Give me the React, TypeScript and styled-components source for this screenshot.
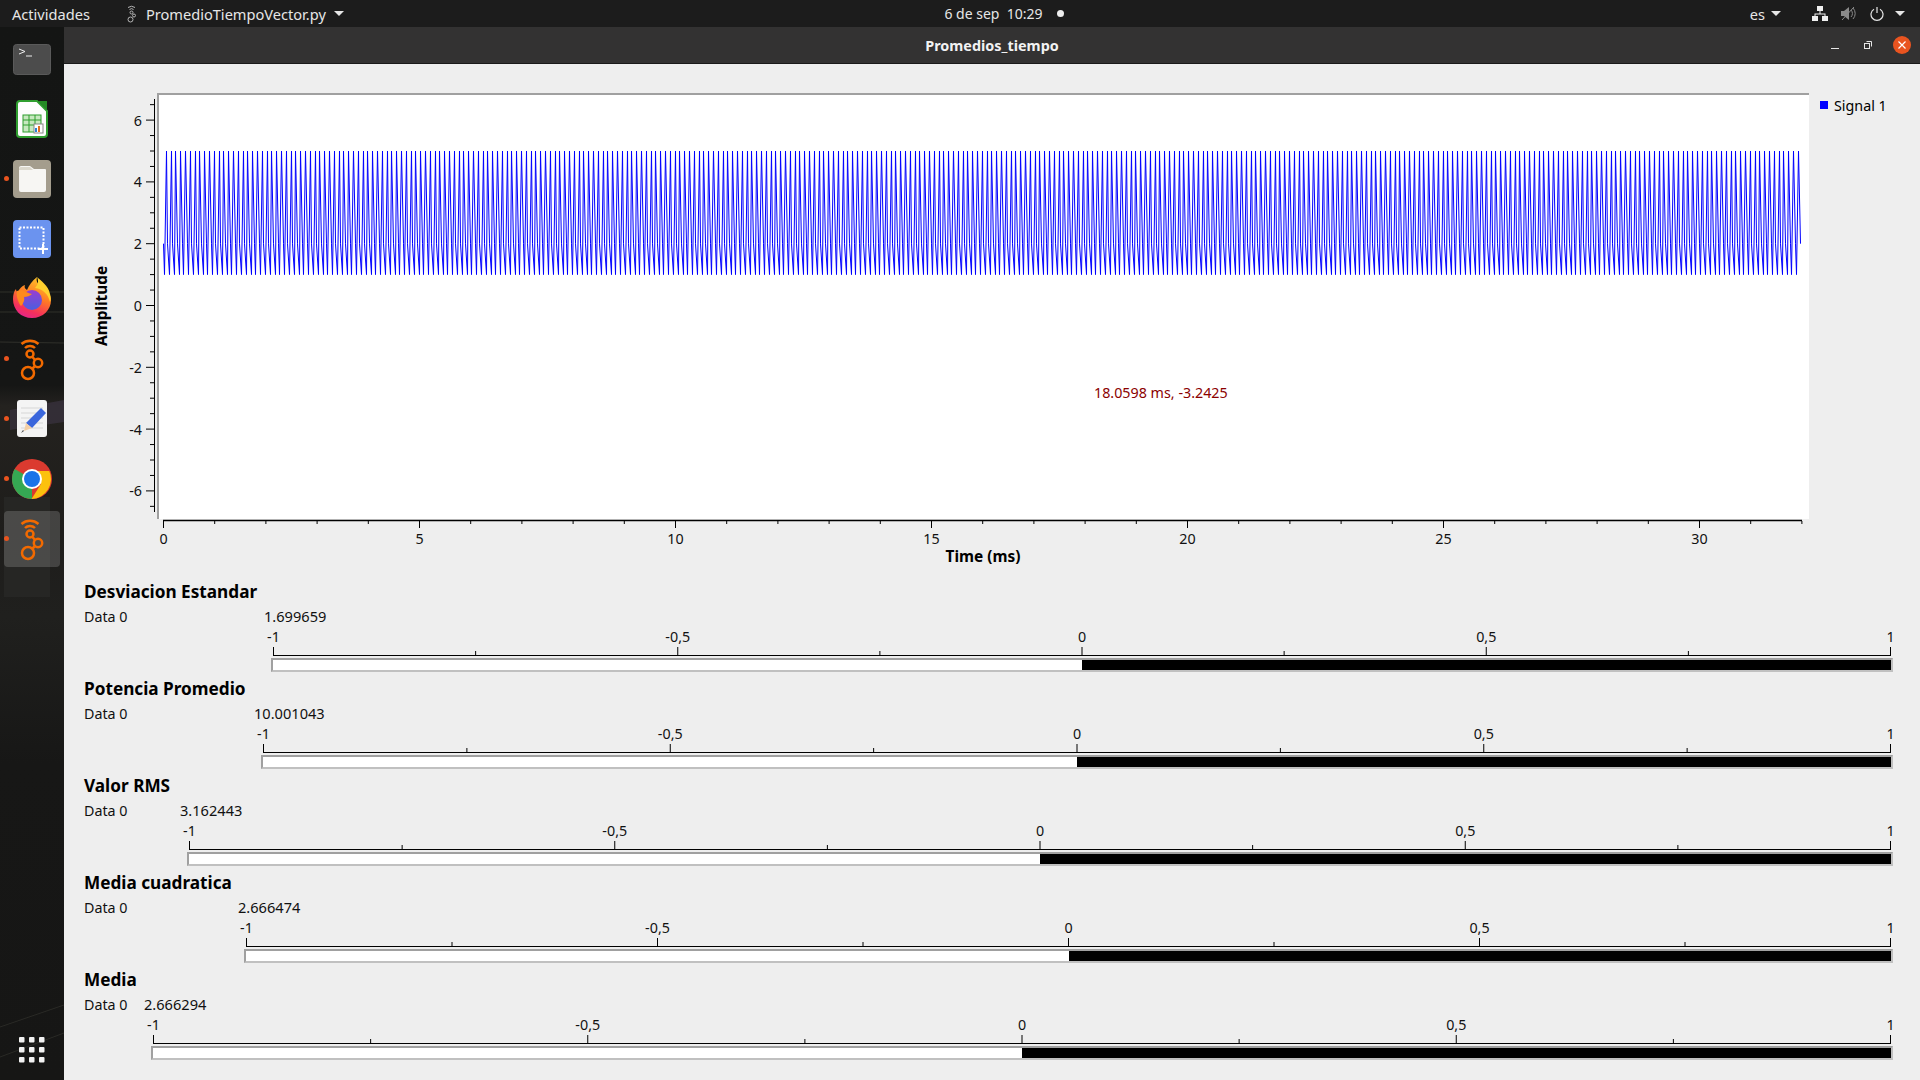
import React from 'react';
import styled, { createGlobalStyle } from 'styled-components';

const uiFont = '"Noto Sans", "Open Sans", "Liberation Sans", sans-serif';

const GlobalStyle = createGlobalStyle`
  html, body {
    margin: 0;
    padding: 0;
    width: 1920px;
    height: 1080px;
    overflow: hidden;
    background: #eeeeee;
    font-family: ${uiFont};
  }
  * { box-sizing: border-box; }
`;

const Desktop = styled.div`
  width: 1920px;
  height: 1080px;
  display: flex;
  flex-direction: column;
`;

const TopBar = styled.header`
  height: 27px;
  flex: none;
  background: #1c1c1c;
  color: #e6e6e6;
  font-size: 14.6px;
  display: grid;
  grid-template-columns: 1fr auto 1fr;
  align-items: center;
`;

const TopLeft = styled.div`
  display: flex;
  align-items: center;
  padding-left: 12px;
`;

const AppMenu = styled.div`
  display: flex;
  align-items: center;
  margin-left: 36px;
  gap: 8px;
`;

const Clock = styled.div`
  display: flex;
  align-items: center;
  margin-left: 88px;
  font-size: 14px;
  white-space: pre;
`;

const ClockDot = styled.span`
  width: 7px;
  height: 7px;
  border-radius: 50%;
  background: #eeeeee;
  margin-left: 14px;
`;

const TopRight = styled.div`
  display: flex;
  align-items: center;
  justify-content: flex-end;
  padding-right: 15px;
`;

const Caret = styled.span<{ $gap?: number }>`
  width: 0;
  height: 0;
  margin-left: ${({ $gap }) => $gap ?? 0}px;
  border-left: 5px solid transparent;
  border-right: 5px solid transparent;
  border-top: 5px solid #e6e6e6;
`;

const TrayIcon = styled.svg<{ $gap: number }>`
  display: block;
  margin-left: ${({ $gap }) => $gap}px;
`;

const Body = styled.div`
  flex: 1;
  display: flex;
  min-height: 0;
`;

const Dock = styled.nav`
  width: 64px;
  flex: none;
  position: relative;
  overflow: hidden;
  display: flex;
  flex-direction: column;
  padding-top: 2px;
  background: linear-gradient(180deg, #141514 0%, #151615 34%, #24221f 36%, #1e1d1b 48%, #20201e 56%, #171716 70%, #161615 100%);
`;

const DockTexture = styled.svg`
  position: absolute;
  left: 0;
  top: 0;
`;

const DockItem = styled.div<{ $active?: boolean; $lift?: number }>`
  position: relative;
  height: 60px;
  flex: none;
  display: flex;
  align-items: center;
  justify-content: center;
  padding-bottom: ${({ $lift }) => $lift ?? 0}px;
  &::before {
    content: '';
    display: ${({ $active }) => ($active ? 'block' : 'none')};
    position: absolute;
    left: 4px;
    right: 4px;
    top: 2px;
    bottom: 2px;
    border-radius: 4px;
    background: rgba(255, 255, 255, 0.17);
  }
  svg { position: relative; }
`;

const RunDot = styled.span`
  position: absolute;
  left: 4px;
  top: 27px;
  width: 5px;
  height: 5px;
  border-radius: 50%;
  background: #e9541f;
`;

const GridButton = styled.div`
  margin-top: auto;
  height: 60px;
  display: flex;
  align-items: center;
  justify-content: center;
  position: relative;
`;

const Window = styled.main`
  flex: 1;
  min-width: 0;
  display: flex;
  flex-direction: column;
  background: #eeeeee;
`;

const TitleBar = styled.div`
  height: 37px;
  flex: none;
  background: #333232;
  border-bottom: 1px solid #1a1a1a;
  position: relative;
  display: flex;
  align-items: center;
  justify-content: center;
  padding-top: 1px;
  color: #f2f2f2;
  font-weight: 700;
  font-size: 14.4px;
`;

const WindowButtons = styled.div`
  position: absolute;
  right: 9px;
  top: 9px;
  display: flex;
  align-items: center;
`;

const CloseButton = styled.div`
  width: 18px;
  height: 18px;
  border-radius: 50%;
  background: #e95420;
  display: flex;
  align-items: center;
  justify-content: center;
  margin-left: 21px;
`;

const PlotArea = styled.section`
  height: 514px;
  flex: none;
  padding-top: 29px;
  display: grid;
  grid-template-columns: 93px 1652px 1fr;
  grid-template-rows: 426px auto;
  color: #000;
`;

const YAxisCell = styled.div`
  display: flex;
  align-items: flex-start;
`;

const AxisTitleY = styled.div`
  width: 24px;
  margin-left: 26px;
  height: 426px;
  writing-mode: vertical-rl;
  transform: rotate(180deg);
  text-align: center;
  font-weight: 700;
  font-size: 15.4px;
  line-height: 24px;
`;

const Canvas = styled.div`
  position: relative;
  background: #fff;
  border-top: 2px solid #a0a0a0;
  border-left: 2px solid #a0a0a0;
  overflow: hidden;
`;

const Tracker = styled.span`
  position: absolute;
  left: 935px;
  top: 288px;
  color: #8b0000;
  font-size: 14.3px;
  white-space: nowrap;
`;

const Legend = styled.div`
  display: flex;
  align-items: center;
  height: 20px;
  margin: 2px 0 0 11px;
  font-size: 14.3px;
  gap: 6px;
`;

const LegendSwatch = styled.span`
  width: 8px;
  height: 8px;
  background: #0000ff;
`;

const XAxisCell = styled.div`
  grid-column: 2 / 4;
  display: flex;
  flex-direction: column;
`;

const AxisTitleX = styled.div`
  width: 1652px;
  text-align: center;
  margin-top: 1px;
  font-weight: 700;
  font-size: 15.4px;
  line-height: 20px;
`;

const Meters = styled.div`
  padding: 0 0 0 20px;
  display: flex;
  flex-direction: column;
`;

const MeterBlock = styled.section<{ $inset: number }>`
  height: 97px;
  display: grid;
  grid-template-columns: ${({ $inset }) => $inset}px 1fr;
  grid-template-rows: 25px 27px 1fr;
  color: #111;
`;

const MeterTitle = styled.h3`
  grid-column: 1 / 3;
  margin: 0;
  align-self: end;
  font-size: 17.2px;
  line-height: 22px;
  font-weight: 700;
  color: #000;
`;

const DataLabel = styled.div`
  font-size: 14.3px;
  line-height: 22px;
  padding-top: 3px;
`;

const ValueText = styled.div<{ $shift: number }>`
  font-size: 14.6px;
  line-height: 22px;
  padding-top: 2px;
  margin-left: ${({ $shift }) => $shift}px;
`;

const Thermo = styled.div`
  grid-column: 2;
  width: 100%;
  display: flex;
  flex-direction: column;
`;

const ThermoBar = styled.div`
  height: 14px;
  margin-top: 1px;
  border-top: 2px solid #a0a0a0;
  border-left: 2px solid #a0a0a0;
  border-right: 2px solid #c0c0c0;
  border-bottom: 2px solid #c0c0c0;
  display: flex;
  background: #fff;
`;

const ThermoFill = styled.div<{ $share: number }>`
  width: ${({ $share }) => $share}%;
  height: 100%;
  margin-left: auto;
  background: #000;
`;

const ScaleSvg = styled.svg`
  display: block;
  overflow: visible;
`;

const SIGNAL_LEVELS = [2, 1, 5];
const SAMPLES = 1024;
const X0 = 3.5; // first sample inside the canvas
const PX_PER_MS = 51.2;
const Y_ZERO = 210.5; // value 0 inside the canvas
const PX_PER_UNIT = 30.9;

const signalPoints = Array.from({ length: SAMPLES }, (_, i) => {
  const x = Math.round(X0 + (i * 1637) / (SAMPLES - 1)) + 0.5;
  const y = Y_ZERO - SIGNAL_LEVELS[i % 3] * PX_PER_UNIT;
  return `${x.toFixed(2)},${y.toFixed(2)}`;
}).join(' ');

function SignalTrace() {
  return (
    <svg width="1650" height="424" style={{ display: 'block' }}>
      <polyline points={signalPoints} fill="none" stroke="#0000ff" strokeWidth="1" strokeLinejoin="bevel" />
    </svg>
  );
}

const axisText = { fontFamily: uiFont, fontSize: 14.3, fill: '#111' };

function YAxis() {
  const ticks: React.ReactNode[] = [];
  for (let v = -6.5; v <= 6.5; v += 0.5) {
    const y = 212.5 - v * PX_PER_UNIT;
    const major = Math.abs(v % 2) === 0;
    ticks.push(<line key={v} x1={major ? 0 : 4} x2="8" y1={y} y2={y} stroke="#000" />);
    if (major) {
      ticks.push(
        <text key={`l${v}`} x="-4" y={y + 5.5} textAnchor="end" style={axisText}>{v}</text>
      );
    }
  }
  return (
    <svg width="10" height="426" style={{ marginLeft: 32, overflow: 'visible', flex: 'none' }}>
      <line x1="8.5" x2="8.5" y1="6" y2="419" stroke="#000" />
      {ticks}
    </svg>
  );
}

function XAxis() {
  const ticks: React.ReactNode[] = [];
  for (let ms = 0; ms <= 32; ms += 1) {
    const x = 6.5 + ms * PX_PER_MS;
    const major = ms % 5 === 0;
    ticks.push(<line key={ms} x1={x} x2={x} y1="1" y2={major ? 8 : 4} stroke="#000" />);
    if (major) {
      ticks.push(
        <text key={`l${ms}`} x={x} y="24" textAnchor="middle" style={axisText}>{ms}</text>
      );
    }
  }
  return (
    <svg width="1660" height="26" style={{ display: 'block', marginTop: 1, overflow: 'visible' }}>
      <line x1="6" x2="1645" y1="0.5" y2="0.5" stroke="#000" strokeWidth="1.5" />
      {ticks}
    </svg>
  );
}

const METERS = [
  { title: 'Desviacion Estandar', value: '1.699659', inset: 187, shift: -7 },
  { title: 'Potencia Promedio', value: '10.001043', inset: 177, shift: -7 },
  { title: 'Valor RMS', value: '3.162443', inset: 103, shift: -7 },
  { title: 'Media cuadratica', value: '2.666474', inset: 160, shift: -6 },
  { title: 'Media', value: '2.666294', inset: 67, shift: -7 },
];

const SCALE_TICKS = [-1, -0.75, -0.5, -0.25, 0, 0.25, 0.5, 0.75, 1];

function ThermoScale({ width }: { width: number }) {
  const span = width - 5;
  return (
    <ScaleSvg width={width} height="27">
      <line x1="2" x2={width - 2} y1="25.5" y2="25.5" stroke="#000" />
      {SCALE_TICKS.map(v => {
        const x = 2.5 + ((v + 1) / 2) * span;
        const major = v * 2 === Math.round(v * 2);
        return (
          <g key={v}>
            <line x1={x} x2={x} y1={major ? 17 : 21} y2="26" stroke="#000" />
            {major && (
              <text x={x} y="12" textAnchor="middle" style={axisText}>
                {String(v).replace('.', ',')}
              </text>
            )}
          </g>
        );
      })}
    </ScaleSvg>
  );
}

function GnuRadioIcon() {
  return (
    <svg width="40" height="44" viewBox="0 0 40 44" fill="none" stroke="#f26a00" strokeWidth="2.500">
      <path d="M9.500 7a13 13 0 0 1 17 0" />
      <path d="M13 11a7 7 0 0 1 10 0" />
      <circle cx="18" cy="17" r="3.500" />
      <circle cx="26" cy="26" r="4.200" />
      <circle cx="16" cy="36" r="6" />
      <path d="M20.500 20l2.500 3M22.500 29.500l-2 2" />
    </svg>
  );
}

function DockIcons() {
  return [
    <DockItem key="terminal">
      <svg width="38" height="31" viewBox="0 0 38 31">
        <rect x="0.500" y="0.500" width="37" height="30" rx="3" fill="#4c4c4c" stroke="#5a5a5a" />
        <path d="M6 5l6 2.500-6 2.500M13 12h6" fill="none" stroke="#eee" strokeWidth="1" />
      </svg>
    </DockItem>,
    <DockItem key="calc">
      <svg width="32" height="38" viewBox="0 0 32 38">
        <path d="M4 1h17l10 10v23a3 3 0 0 1-3 3H4a3 3 0 0 1-3-3V4a3 3 0 0 1 3-3z" fill="#fdfdfd" stroke="#2f9e2f" strokeWidth="2" />
        <path d="M22 1l9 0 0 9z" fill="#248a24" />
        <rect x="7" y="15" width="18" height="17" fill="#c7e8c0" stroke="#2f9e2f" />
        <path d="M7 20h18M7 25h18M13 15v17M19 15v17" stroke="#2f9e2f" />
        <rect x="18" y="24" width="9" height="9" fill="#fff" stroke="#888" />
        <path d="M20 32v-4" stroke="#2a7fd4" strokeWidth="2" />
        <path d="M23 32v-6" stroke="#e07020" strokeWidth="2" />
      </svg>
    </DockItem>,
    <DockItem key="files">
      <RunDot />
      <svg width="38" height="38" viewBox="0 0 38 38">
        <rect width="38" height="38" rx="4" fill="#a49d8d" />
        <path d="M6 8a2 2 0 0 1 2-2h9l4 3h11a1 1 0 0 1 1 1v20a2 2 0 0 1-2 2H8a2 2 0 0 1-2-2z" fill="#f7f6f3" />
        <path d="M6 9a2 2 0 0 1 2-2h9l3 3H6z" fill="#dcd8cc" />
      </svg>
    </DockItem>,
    <DockItem key="shot">
      <svg width="38" height="38" viewBox="0 0 38 38">
        <rect width="38" height="38" rx="4" fill="#6b93ef" />
        <rect x="6.500" y="7.500" width="24" height="21" fill="none" stroke="#fff" strokeWidth="2" strokeDasharray="2 1.500" />
        <path d="M30 24v10M25 29h10" stroke="#fff" strokeWidth="2" />
      </svg>
    </DockItem>,
    <DockItem key="firefox" $lift={4}>
      <svg width="38" height="42" viewBox="0 0 38 42">
        <defs>
          <linearGradient id="ffBody" x1="0.700" y1="0" x2="0.300" y2="1">
            <stop offset="0" stopColor="#ffc82a" />
            <stop offset="0.450" stopColor="#ff7a24" />
            <stop offset="0.800" stopColor="#f5305c" />
            <stop offset="1" stopColor="#e3258c" />
          </linearGradient>
          <linearGradient id="ffGlobe" x1="0.500" y1="0" x2="0.500" y2="1">
            <stop offset="0" stopColor="#9a3dd0" />
            <stop offset="1" stopColor="#4a5fe0" />
          </linearGradient>
        </defs>
        <path d="M24 1c-1 4 0 6 3 8 6 4 11 9 11 15 0 10-8 18-19 18C8 42 0 34 0 23c0-4 1-8 3-10 0 2 1 3 2 3 1-3 4-6 7-7-1 2 0 4 2 5 2-5 5-9 10-13z" fill="url(#ffBody)" />
        <circle cx="19" cy="24" r="10" fill="url(#ffGlobe)" />
        <path d="M24 1c4 4 11 8 13 17 1 3 1 6 0 8-2-8-7-13-15-14 3-3 4-7 2-11z" fill="#ffd02e" />
        <path d="M4 15c3-1 6-1 9 1 3 1 5 2 6 2-2 2-5 3-8 3 1 3-1 7-3 9-3-4-5-10-4-15z" fill="#ff8a1e" />
      </svg>
    </DockItem>,
    <DockItem key="grc">
      <RunDot />
      <GnuRadioIcon />
    </DockItem>,
    <DockItem key="editor">
      <RunDot />
      <svg width="32" height="38" viewBox="0 0 32 38">
        <rect width="30" height="37" x="1" rx="3" fill="#f4f4f4" />
        <path d="M5 8h22M5 13h22M5 18h22M5 23h22M5 28h22" stroke="#d6d6d6" />
        <path d="M25 8l5 5-14 15-6-5z" fill="#3a66dc" />
        <path d="M10 23l6 5-8 3z" fill="#f3cfa6" />
        <path d="M5 33l3-2-1-1z" fill="#444" />
      </svg>
    </DockItem>,
    <DockItem key="chrome">
      <RunDot />
      <svg width="40" height="40" viewBox="0 0 40 40">
        <circle cx="20" cy="20" r="20" fill="#db3a2f" />
        <path d="M20 20L2.700 10A20 20 0 0 0 20 40z" fill="#35a853" />
        <path d="M20 12h17.300A20 20 0 0 1 20 40l-0.500 0L29 25z" fill="#fcc10d" />
        <circle cx="20" cy="20" r="10" fill="#fff" />
        <circle cx="20" cy="20" r="8" fill="#1a73e8" />
      </svg>
    </DockItem>,
    <DockItem key="grc2" $active>
      <RunDot />
      <GnuRadioIcon />
    </DockItem>,
  ];
}

function App() {
  return (
    <Desktop>
      <GlobalStyle />
      <TopBar>
        <TopLeft>
          Actividades
          <AppMenu>
            <svg width="12" height="18" viewBox="0 0 12 18" fill="none" stroke="#b5b5b5" strokeWidth="1">
              <path d="M2 2.500a6 6 0 0 1 7 0M3.500 4.500a3 3 0 0 1 4 0" />
              <circle cx="5.500" cy="7.500" r="1.500" />
              <circle cx="8" cy="10.500" r="1.500" />
              <circle cx="4.500" cy="14.500" r="2.500" />
            </svg>
            PromedioTiempoVector.py
            <Caret />
          </AppMenu>
        </TopLeft>
        <Clock>
          6 de sep  10:29
          <ClockDot />
        </Clock>
        <TopRight>
          es
          <Caret $gap={6} />
          <TrayIcon $gap={31} width="16" height="15" viewBox="0 0 16 15" fill="#f0f0f0">
            <rect x="5" y="0" width="6" height="5" />
            <rect x="0" y="10" width="6" height="5" />
            <rect x="10" y="10" width="6" height="5" />
            <path d="M7.500 5h1v2.500H13.500V10h-1V8.500h-9V10h-1V7.500h5z" />
          </TrayIcon>
          <TrayIcon $gap={13} width="16" height="15" viewBox="0 0 16 15" fill="none">
            <path d="M0 5h3l5-4v13l-5-4H0z" fill="#8a8a8a" />
            <path d="M10 4a5 5 0 0 1 0 7M12 2a8 8 0 0 1 0 11" stroke="#8a8a8a" />
            <path d="M1 14L13 1" stroke="#8a8a8a" />
          </TrayIcon>
          <TrayIcon $gap={13} width="14" height="14" viewBox="0 0 14 14" fill="none" stroke="#e6e6e6" strokeWidth="1.200">
            <path d="M4 2.200a6 6 0 1 0 6 0M7 0v6" />
          </TrayIcon>
          <Caret $gap={11} />
        </TopRight>
      </TopBar>
      <Body>
        <Dock>
          <DockTexture width="64" height="1053" viewBox="0 0 64 1053" fill="none">
            <path d="M0 265h64M0 285h64M0 315l64 1" stroke="#3c3c35" strokeWidth="1" opacity="0.7" />
            <path d="M10 383l54-10v22l-54 8z" fill="#3a3340" opacity="0.7" />
            <path d="M4 470h46v100H4z" fill="#2c2c2a" opacity="0.6" />
            <path d="M0 1000l64-22M0 1030l64-24" stroke="#2a2a26" />
          </DockTexture>
          <DockIcons />
          <GridButton>
            <svg width="26" height="26" viewBox="0 0 26 26" fill="#f2f2f2">
              {[0, 10, 20].map(y =>
                [0, 10, 20].map(x => <rect key={`${x}-${y}`} x={x} y={y} width="5.500" height="5.500" rx="1" />)
              )}
            </svg>
          </GridButton>
        </Dock>
        <Window>
          <TitleBar>
            Promedios_tiempo
            <WindowButtons>
              <svg width="8" height="8" viewBox="0 0 8 8"><path d="M0 7.500h8" stroke="#e6e6e6" /></svg>
              <svg width="8" height="8" viewBox="0 0 8 8" fill="none" stroke="#e6e6e6" style={{ marginLeft: 25 }}>
                <rect x="0.500" y="2.500" width="5" height="5" />
                <path d="M2.500 0.500h5v5" />
              </svg>
              <CloseButton>
                <svg width="8" height="8" viewBox="0 0 8 8"><path d="M0.500 0.500l7 7M7.500 0.500l-7 7" stroke="#fff" strokeWidth="1.200" /></svg>
              </CloseButton>
            </WindowButtons>
          </TitleBar>
          <PlotArea>
            <YAxisCell>
              <AxisTitleY>Amplitude</AxisTitleY>
              <YAxis />
            </YAxisCell>
            <Canvas>
              <SignalTrace />
              <Tracker>18.0598 ms, -3.2425</Tracker>
            </Canvas>
            <Legend>
              <LegendSwatch />
              Signal 1
            </Legend>
            <XAxisCell>
              <XAxis />
              <AxisTitleX>Time (ms)</AxisTitleX>
            </XAxisCell>
          </PlotArea>
          <Meters>
            {METERS.map(m => (
              <MeterBlock key={m.title} $inset={m.inset}>
                <MeterTitle>{m.title}</MeterTitle>
                <DataLabel>Data 0</DataLabel>
                <ValueText $shift={m.shift}>{m.value}</ValueText>
                <Thermo>
                  <ThermoScale width={1893 - 84 - m.inset} />
                  <ThermoBar style={{ width: 1893 - 84 - m.inset }}>
                    <ThermoFill $share={50} />
                  </ThermoBar>
                </Thermo>
              </MeterBlock>
            ))}
          </Meters>
        </Window>
      </Body>
    </Desktop>
  );
}

export default App;
